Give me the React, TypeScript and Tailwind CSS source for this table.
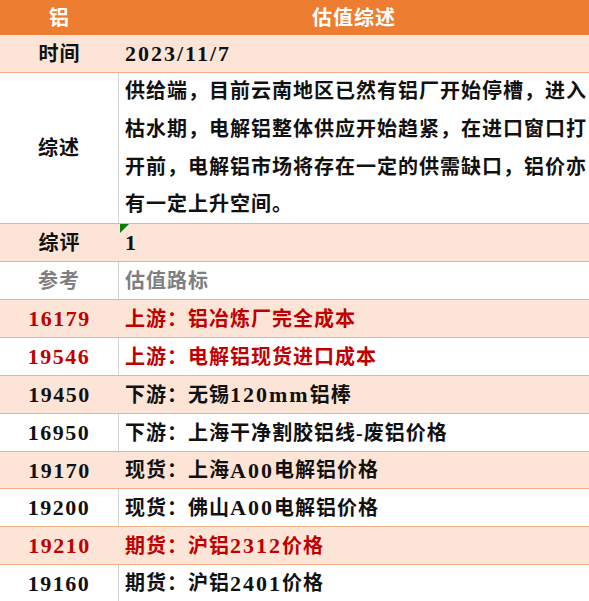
import React from "react"

type Row = {
  label: string
  value: React.ReactNode
  height: string
  peach: boolean
  tone: "black" | "red" | "gray"
  numeric?: boolean
}

const L = ({ children }: { children: React.ReactNode }) => (
  <span className="text-[22px] tracking-[2px]">{children}</span>
)

const rows: Row[] = [
  { label: "16179", value: "上游：铝冶炼厂完全成本", height: "h-[38px]", peach: true, tone: "red", numeric: true },
  { label: "19546", value: "上游：电解铝现货进口成本", height: "h-[38px]", peach: false, tone: "red", numeric: true },
  {
    label: "19450",
    value: (
      <>
        下游：无锡<L>120mm</L>铝棒
      </>
    ),
    height: "h-[38px]",
    peach: true,
    tone: "black",
    numeric: true,
  },
  { label: "16950", value: "下游：上海干净割胶铝线-废铝价格", height: "h-[38px]", peach: false, tone: "black", numeric: true },
  {
    label: "19170",
    value: (
      <>
        现货：上海<L>A00</L>电解铝价格
      </>
    ),
    height: "h-[37px]",
    peach: true,
    tone: "black",
    numeric: true,
  },
  {
    label: "19200",
    value: (
      <>
        现货：佛山<L>A00</L>电解铝价格
      </>
    ),
    height: "h-[38px]",
    peach: false,
    tone: "black",
    numeric: true,
  },
  {
    label: "19210",
    value: (
      <>
        期货：沪铝<L>2312</L>价格
      </>
    ),
    height: "h-[38px]",
    peach: true,
    tone: "red",
    numeric: true,
  },
  {
    label: "19160",
    value: (
      <>
        期货：沪铝<L>2401</L>价格
      </>
    ),
    height: "h-[37px]",
    peach: false,
    tone: "black",
    numeric: true,
  },
]

const toneClass = {
  black: "text-[#111111]",
  red: "text-[#C00000]",
  gray: "text-[#7F7F7F]",
}

const summary = [
  "供给端，目前云南地区已然有铝厂开始停槽，进入",
  "枯水期，电解铝整体供应开始趋紧，在进口窗口打",
  "开前，电解铝市场将存在一定的供需缺口，铝价亦",
  "有一定上升空间。",
]

function TableRow({ label, value, height, peach, tone, numeric }: Row) {
  return (
    <div
      className={`flex ${height} border-b border-[#F4B084] ${peach ? "bg-[#FCE4D6]" : "bg-white"} ${toneClass[tone]}`}
    >
      <div
        className={`w-[119px] shrink-0 flex items-center justify-center ${peach ? "" : "border-r border-[#D4D4D4]"}`}
      >
        {numeric ? <span className="text-[22px] tracking-[1.5px]">{label}</span> : label}
      </div>
      <div className="flex-1 flex items-center pl-[6px] whitespace-nowrap">{value}</div>
    </div>
  )
}

export default function App() {
  return (
    <div
      className="w-[589px] h-[601px] overflow-hidden bg-white font-bold text-[20px] tracking-[1px]"
      style={{ fontFamily: '"Liberation Serif", "Noto Sans CJK SC", serif' }}
    >
      <div className="flex h-[35px] bg-[#ED7D31] text-white">
        <div className="w-[119px] shrink-0 flex items-center justify-center">铝</div>
        <div className="flex-1 flex items-center justify-center">估值综述</div>
      </div>

      <TableRow
        label="时间"
        value={<L>2023/11/7</L>}
        height="h-[38px]"
        peach={true}
        tone="black"
      />

      <div className="flex h-[151px] border-b border-[#F4B084] bg-white text-[#111111]">
        <div className="w-[119px] shrink-0 flex items-center justify-center border-r border-[#D4D4D4]">综述</div>
        <div className="flex-1 pl-[6px] leading-[37.75px] whitespace-nowrap">
          {summary.map((line) => (
            <div key={line}>{line}</div>
          ))}
        </div>
      </div>

      <div className="relative">
        <TableRow label="综评" value={<L>1</L>} height="h-[38px]" peach={true} tone="black" />
        {/* comment marker */}
        <svg className="absolute left-[120px] top-0" width="9" height="9" viewBox="0 0 9 9">
          <polygon points="0,0 9,0 0,9" fill="#0E7A0E" />
        </svg>
      </div>

      <TableRow label="参考" value="估值路标" height="h-[38px]" peach={false} tone="gray" />

      {rows.map((row) => (
        <TableRow key={row.label} {...row} />
      ))}
    </div>
  )
}
